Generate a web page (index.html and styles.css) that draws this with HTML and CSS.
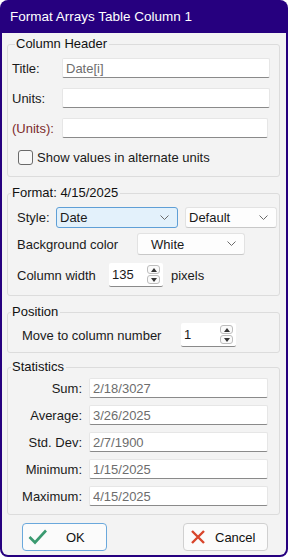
FILE: index.html
```html
<!DOCTYPE html>
<html lang="en">
<head>
<meta charset="UTF-8">
<title>Format Arrays Table Column 1</title>
<link rel="stylesheet" href="styles.css">
</head>
<body>

<div class="window">
    <div class="titlebar">Format Arrays Table Column 1</div>
    <div class="client">

        <fieldset class="group header-group">
            <legend>Column Header</legend>
            <div class="row">
                <label class="row-label">Title:</label>
                <input class="field" type="text" value="Date[i]" readonly>
            </div>
            <div class="row">
                <label class="row-label">Units:</label>
                <input class="field" type="text" value="">
            </div>
            <div class="row">
                <label class="row-label alt">(Units):</label>
                <input class="field short" type="text" value="">
            </div>
            <label class="check-row">
                <span class="checkbox"></span>
                Show values in alternate units
            </label>
        </fieldset>

        <fieldset class="group format-group">
            <legend>Format: 4/15/2025</legend>
            <div class="row style-row">
                <span class="row-label">Style:</span>
                <div class="select focused style-select">Date<svg class="chev" width="9" height="6" viewBox="0 0 9 6"><polyline points="0.5,0.5 4.5,4.5 8.5,0.5" /></svg></div>
                <div class="select default-select">Default<svg class="chev" width="9" height="6" viewBox="0 0 9 6"><polyline points="0.5,0.5 4.5,4.5 8.5,0.5" /></svg></div>
            </div>
            <div class="row bg-row">
                <span class="row-label">Background color</span>
                <div class="select color-select"><span class="select-text">White</span><svg class="chev" width="9" height="6" viewBox="0 0 9 6"><polyline points="0.5,0.5 4.5,4.5 8.5,0.5" /></svg></div>
            </div>
            <div class="row width-row">
                <span class="row-label">Column width</span>
                <div class="spin">
                    <span class="spin-value">135</span>
                    <span class="spin-btns">
                        <span class="spin-btn"><svg width="6" height="4" viewBox="0 0 6 4"><polygon points="0,4 3,0 6,4" /></svg></span>
                        <span class="spin-btn"><svg width="6" height="4" viewBox="0 0 6 4"><polygon points="0,0 6,0 3,4" /></svg></span>
                    </span>
                </div>
                <span class="unit">pixels</span>
            </div>
        </fieldset>

        <fieldset class="group position-group">
            <legend>Position</legend>
            <div class="row move-row">
                <span class="row-label">Move to column number</span>
                <div class="spin">
                    <span class="spin-value">1</span>
                    <span class="spin-btns">
                        <span class="spin-btn"><svg width="6" height="4" viewBox="0 0 6 4"><polygon points="0,4 3,0 6,4" /></svg></span>
                        <span class="spin-btn"><svg width="6" height="4" viewBox="0 0 6 4"><polygon points="0,0 6,0 3,4" /></svg></span>
                    </span>
                </div>
            </div>
        </fieldset>

        <fieldset class="group stats-group">
            <legend>Statistics</legend>
            <div class="stat-row"><span class="stat-label">Sum:</span><input class="field stat" type="text" value="2/18/3027" readonly></div>
            <div class="stat-row"><span class="stat-label">Average:</span><input class="field stat" type="text" value="3/26/2025" readonly></div>
            <div class="stat-row"><span class="stat-label">Std. Dev:</span><input class="field stat" type="text" value="2/7/1900" readonly></div>
            <div class="stat-row"><span class="stat-label">Minimum:</span><input class="field stat" type="text" value="1/15/2025" readonly></div>
            <div class="stat-row"><span class="stat-label">Maximum:</span><input class="field stat" type="text" value="4/15/2025" readonly></div>
        </fieldset>

        <div class="buttons">
            <button class="btn btn-ok">
                <svg width="20" height="18" viewBox="0 0 20 18"><polyline points="1.5,9 7,14.5 18,2.5" /></svg>
                <span>OK</span>
            </button>
            <button class="btn btn-cancel">
                <svg width="16" height="16" viewBox="0 0 16 16"><path d="M2 2 L14 14 M14 2 L2 14" /></svg>
                <span>Cancel</span>
            </button>
        </div>
    </div>
</div>

</body>
</html>
```

FILE: styles.css
```css
body {
    margin: 0;
    background: #ffffff;
    font-family: "Liberation Sans", Arial, sans-serif;
    font-size: 13px;
    color: #1a1a1a;
}

.window {
    width: 288px;
    height: 557px;
    box-sizing: border-box;
    background: #26007f;
    border-radius: 8px;
    padding: 0 2px 2px 2px;
    display: flex;
    flex-direction: column;
}

.titlebar {
    height: 33px;
    flex: none;
    color: #ffffff;
    font-size: 13.5px;
    line-height: 33px;
    padding-left: 8px;
}

.client {
    flex: 1;
    background: #f3f3f3;
    border-radius: 0 0 6px 6px;
    display: flex;
    flex-direction: column;
}

/* Group boxes */
.group {
    margin: 0 6px 0 5px;
    padding: 0;
    border: 1px solid #dcdcdc;
    border-radius: 3px;
    min-width: 0;
}

.group legend {
    margin-left: 3px;
    padding: 0 2px 0 1px;
    line-height: 16px;
    color: #111;
}

.header-group {
    margin-top: 3px;
    padding: 6px 0 10px 4px;
}

.format-group {
    margin-top: 8px;
    padding: 6px 0 8px 0;
}

.format-group .row {
    margin-left: 9px;
}

.position-group {
    margin-top: 8px;
    padding: 0 0 5px 0;
}

.stats-group {
    margin-top: 6px;
    padding: 3px 0 8px 0;
}

.row {
    display: flex;
    align-items: center;
    height: 20px;
    margin-bottom: 10px;
}

.row-label {
    width: 50px;
    flex: none;
}

.row-label.alt {
    color: #7b2b2b;
}

.field {
    appearance: none;
    box-sizing: border-box;
    height: 20px;
    width: 208px;
    margin: 0;
    padding: 0 3px;
    border: 1px solid #e6e6e6;
    border-bottom-color: #8a8a8a;
    border-radius: 2px;
    background: #ffffff;
    font-family: inherit;
    font-size: 13px;
    color: #6d6d6d;
    outline: none;
}

.field.short {
    width: 206px;
}

.check-row {
    display: flex;
    align-items: center;
    gap: 4px;
    height: 18px;
    padding-left: 6px;
}

.checkbox {
    width: 13px;
    height: 13px;
    border: 1px solid #6a6a6a;
    border-radius: 3px;
    background: #f8f8f8;
}

/* Format group */
.style-row {
    height: 21px;
    margin-bottom: 5px;
}

.style-row .row-label {
    width: 39px;
}

.select {
    box-sizing: border-box;
    height: 21px;
    display: flex;
    align-items: center;
    justify-content: space-between;
    padding: 0 8px 0 3px;
    background: #fdfdfd;
    border: 1px solid #e2e2e2;
    border-bottom-color: #c8c8c8;
    border-radius: 3px;
}

.select .chev {
    fill: none;
    stroke: #6a6a6a;
    stroke-width: 1;
}

.select.focused {
    background: #e3f1fb;
    border-color: #5f9fd6;
}

.style-select {
    width: 122px;
}

.default-select {
    width: 92px;
    margin-left: 7px;
}

.bg-row {
    height: 22px;
    margin-bottom: 8px;
}

.bg-row .row-label {
    width: 120px;
}

.color-select {
    width: 108px;
    height: 22px;
    padding-left: 13px;
}

.format-group .width-row {
    height: 24px;
    margin-bottom: 0;
}

.width-row .row-label {
    width: 92px;
}

.spin {
    box-sizing: border-box;
    width: 54px;
    height: 24px;
    display: flex;
    align-items: center;
    justify-content: space-between;
    padding: 0 3px 0 3px;
    background: #ffffff;
    border-bottom: 1px solid #8a8a8a;
    border-radius: 2px;
}

.spin-btns {
    display: flex;
    flex-direction: column;
    gap: 1px;
}

.spin-btn {
    box-sizing: border-box;
    width: 13px;
    height: 9px;
    border: 1px solid #bdbdbd;
    border-radius: 3px;
    display: flex;
    align-items: center;
    justify-content: center;
    background: #fafafa;
}

.spin-btn svg {
    fill: #333;
}

.unit {
    margin-left: 8px;
}

.move-row {
    height: 24px;
    margin: 3px 0 0 14px;
}

.move-row .row-label {
    width: 159px;
}

.move-row .spin {
    width: 55px;
}

/* Statistics */
.stat-row {
    display: flex;
    align-items: center;
    height: 20px;
    margin-top: 7px;
}

.stat-row:first-of-type {
    margin-top: 0;
}

.stat-label {
    width: 74px;
    text-align: right;
    flex: none;
}

.field.stat {
    width: 179px;
    margin-left: 7px;
}

/* Buttons */
.buttons {
    display: flex;
    justify-content: space-between;
    padding: 8px 18px 0 20px;
}

.btn {
    box-sizing: border-box;
    width: 85px;
    height: 28px;
    display: flex;
    align-items: center;
    gap: 9px;
    padding: 0 6px;
    background: #fbfbfb;
    border: 1px solid #d0d0d0;
    border-radius: 4px;
    font-family: inherit;
    font-size: 13px;
    color: #111;
}

.btn-ok {
    border-color: #6aa8dc;
    gap: 18px;
    padding-left: 5px;
}

.btn-ok svg {
    fill: none;
    stroke: #3a9a70;
    stroke-width: 2.6;
}

.btn-cancel svg {
    stroke: #d8452b;
    stroke-width: 2.4;
}
```
